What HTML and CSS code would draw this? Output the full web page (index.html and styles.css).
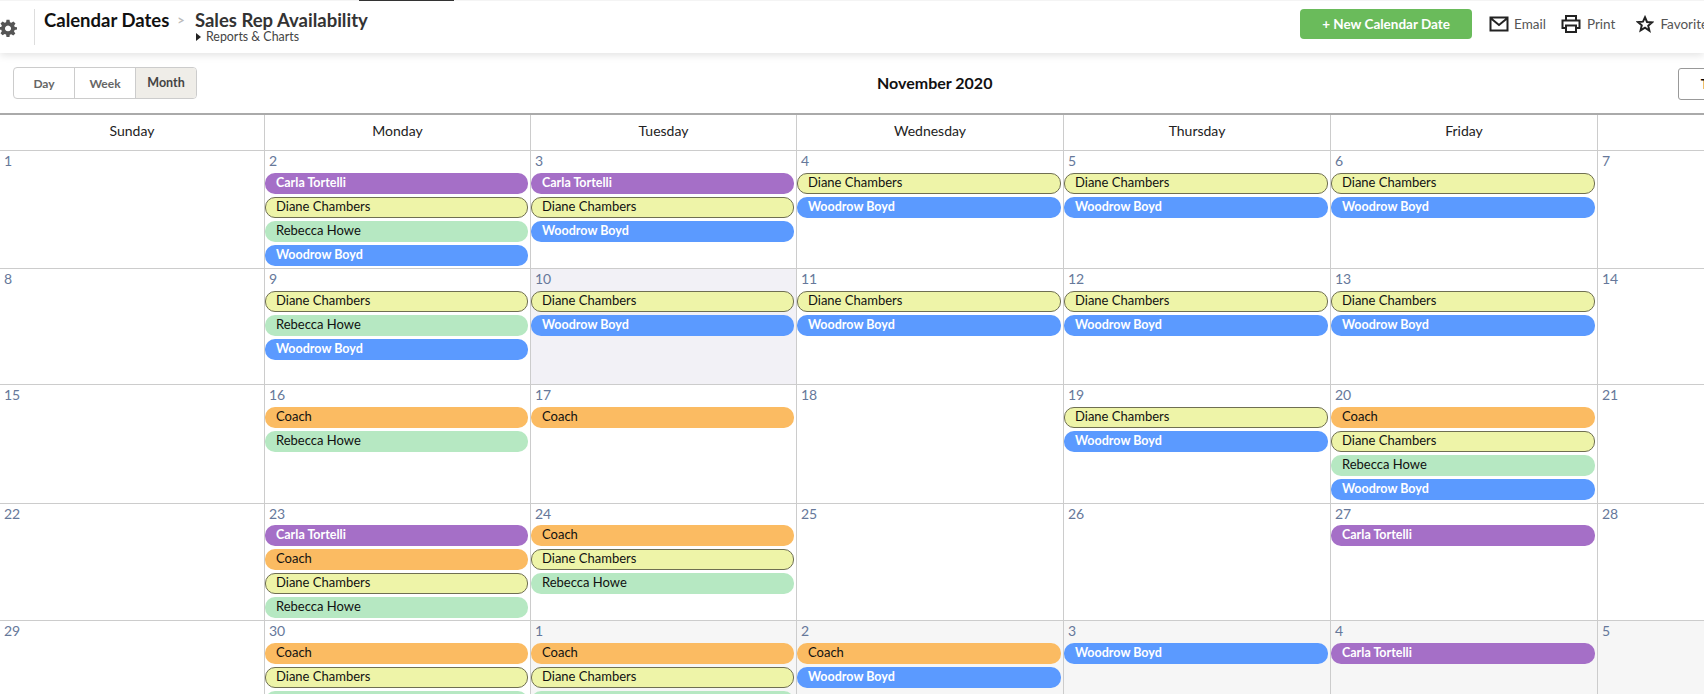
FILE: index.html
```html
<!DOCTYPE html>
<html lang="en">
<head>
    <meta charset="UTF-8">
    <title>Sales Rep Availability</title>
    <link rel="stylesheet" href="styles.css">
</head>
<body>

    <!-- Top bar -->
    <header class="topbar">
        <span class="tab-edge"></span>
        <svg class="gear" width="18" height="18" viewBox="0 0 24 24"><path fill="#555" fill-rule="evenodd" d="M10 1h4l.6 3.2 1.900.8 2.700-1.800 2.800 2.800-1.800 2.700.8 1.900L24 11v3l-3.200.6-.8 1.900 1.800 2.700-2.800 2.800-2.700-1.800-1.900.8L14 24h-4l-.6-3.200-1.900-.8-2.700 1.800L2 19l1.800-2.700-.8-1.900L0 14v-3l3-.4.8-1.900L2 6l2.800-2.800 2.700 1.800 1.900-.8zM12 8.500a4 4 0 1 0 .01 0z"/></svg>
        <div class="titles">
            <div class="title-line">
                <span class="title-main">Calendar Dates</span>
                <span class="title-sep">&gt;</span>
                <span class="title-report">Sales Rep Availability</span>
            </div>
            <div class="subtitle"><span class="caret"></span>Reports &amp; Charts</div>
        </div>
        <div class="actions">
            <button class="new-btn">+ New Calendar Date</button>
            <span class="action email">
                <svg width="20" height="16" viewBox="0 0 20 16"><path fill="none" stroke="#222" stroke-width="2" d="M1.500 1.500h17v13h-17zM1.500 2l8.500 7 8.500-7"/></svg>
                Email
            </span>
            <span class="action print">
                <svg width="20" height="20" viewBox="0 0 20 20"><path fill="none" stroke="#222" stroke-width="2" d="M5 6V2h10v4M5 14H1.500V6.500h17V14H15M5 11.500h10V18H5z"/></svg>
                Print
            </span>
            <span class="action favorite">
                <svg width="18" height="18" viewBox="0 0 24 24"><path fill="none" stroke="#222" stroke-width="2.600" stroke-linejoin="miter" d="M12 3l2.700 6.300 6.800.6-5.200 4.400 1.600 6.700L12 17l-5.900 3.500 1.600-6.700-5.200-4.400 6.800-.6z"/></svg>
                Favorites
            </span>
        </div>
    </header>

    <!-- View switch -->
    <div class="toolbar">
        <div class="views">
            <span class="view">Day</span>
            <span class="view">Week</span>
            <span class="view active">Month</span>
        </div>
        <div class="month-title">November 2020</div>
        <button class="today">Today</button>
    </div>

    <!-- Calendar -->
    <div class="calendar">
        <div class="head">Sunday</div>
        <div class="head">Monday</div>
        <div class="head">Tuesday</div>
        <div class="head">Wednesday</div>
        <div class="head">Thursday</div>
        <div class="head">Friday</div>
        <div class="head">Saturday</div>

        <div class="day r1"><span class="num">1</span></div>
        <div class="day r1"><span class="num">2</span><div class="ev carla">Carla Tortelli</div><div class="ev diane">Diane Chambers</div><div class="ev rebecca">Rebecca Howe</div><div class="ev woody">Woodrow Boyd</div></div>
        <div class="day r1"><span class="num">3</span><div class="ev carla">Carla Tortelli</div><div class="ev diane">Diane Chambers</div><div class="ev woody">Woodrow Boyd</div></div>
        <div class="day r1"><span class="num">4</span><div class="ev diane">Diane Chambers</div><div class="ev woody">Woodrow Boyd</div></div>
        <div class="day r1"><span class="num">5</span><div class="ev diane">Diane Chambers</div><div class="ev woody">Woodrow Boyd</div></div>
        <div class="day r1"><span class="num">6</span><div class="ev diane">Diane Chambers</div><div class="ev woody">Woodrow Boyd</div></div>
        <div class="day r1"><span class="num">7</span></div>

        <div class="day r2"><span class="num">8</span></div>
        <div class="day r2"><span class="num">9</span><div class="ev diane">Diane Chambers</div><div class="ev rebecca">Rebecca Howe</div><div class="ev woody">Woodrow Boyd</div></div>
        <div class="day r2 now"><span class="num">10</span><div class="ev diane">Diane Chambers</div><div class="ev woody">Woodrow Boyd</div></div>
        <div class="day r2"><span class="num">11</span><div class="ev diane">Diane Chambers</div><div class="ev woody">Woodrow Boyd</div></div>
        <div class="day r2"><span class="num">12</span><div class="ev diane">Diane Chambers</div><div class="ev woody">Woodrow Boyd</div></div>
        <div class="day r2"><span class="num">13</span><div class="ev diane">Diane Chambers</div><div class="ev woody">Woodrow Boyd</div></div>
        <div class="day r2"><span class="num">14</span></div>

        <div class="day r3"><span class="num">15</span></div>
        <div class="day r3"><span class="num">16</span><div class="ev coach">Coach</div><div class="ev rebecca">Rebecca Howe</div></div>
        <div class="day r3"><span class="num">17</span><div class="ev coach">Coach</div></div>
        <div class="day r3"><span class="num">18</span></div>
        <div class="day r3"><span class="num">19</span><div class="ev diane">Diane Chambers</div><div class="ev woody">Woodrow Boyd</div></div>
        <div class="day r3"><span class="num">20</span><div class="ev coach">Coach</div><div class="ev diane">Diane Chambers</div><div class="ev rebecca">Rebecca Howe</div><div class="ev woody">Woodrow Boyd</div></div>
        <div class="day r3"><span class="num">21</span></div>

        <div class="day r4"><span class="num">22</span></div>
        <div class="day r4"><span class="num">23</span><div class="ev carla">Carla Tortelli</div><div class="ev coach">Coach</div><div class="ev diane">Diane Chambers</div><div class="ev rebecca">Rebecca Howe</div></div>
        <div class="day r4"><span class="num">24</span><div class="ev coach">Coach</div><div class="ev diane">Diane Chambers</div><div class="ev rebecca">Rebecca Howe</div></div>
        <div class="day r4"><span class="num">25</span></div>
        <div class="day r4"><span class="num">26</span></div>
        <div class="day r4"><span class="num">27</span><div class="ev carla">Carla Tortelli</div></div>
        <div class="day r4"><span class="num">28</span></div>

        <div class="day r5"><span class="num">29</span></div>
        <div class="day r5"><span class="num">30</span><div class="ev coach">Coach</div><div class="ev diane">Diane Chambers</div><div class="ev rebecca">Rebecca Howe</div></div>
        <div class="day r5 other"><span class="num">1</span><div class="ev coach">Coach</div><div class="ev diane">Diane Chambers</div><div class="ev rebecca">Rebecca Howe</div></div>
        <div class="day r5 other"><span class="num">2</span><div class="ev coach">Coach</div><div class="ev woody">Woodrow Boyd</div></div>
        <div class="day r5 other"><span class="num">3</span><div class="ev woody">Woodrow Boyd</div></div>
        <div class="day r5 other"><span class="num">4</span><div class="ev carla">Carla Tortelli</div></div>
        <div class="day r5 other"><span class="num">5</span></div>
    </div>

</body>
</html>
```

FILE: styles.css
```css
html, body {
    margin: 0;
    height: 694px;
    overflow: hidden;
    background: #fff;
    font-family: Lato, "Liberation Sans", sans-serif;
    color: #111;
}

/* Top bar */
.topbar {
    position: relative;
    display: flex;
    align-items: flex-start;
    height: 53px;
    border-top: 1px solid #f4f4f4;
    box-sizing: border-box;
    box-shadow: 0 2px 8px rgba(0,0,0,0.12);
}
.tab-edge {
    position: absolute;
    left: 359px;
    top: -1px;
    width: 95px;
    height: 1px;
    background-color: #333;
}
.gear {
    margin: 18px 0 0 -1px;
}
.titles {
    margin: 8px 0 0 17px;
    height: 36px;
    padding: 0 0 0 9px;
    border-left: 1px solid #ddd;
}
.title-line {
    display: flex;
    align-items: center;
    height: 21px;
    font-size: 18.500px;
    font-weight: 700;
}
.title-main {
    color: #111;
}
.title-sep {
    margin: 0 10px 0 8px;
    color: #bbb;
    font-size: 13px;
}
.title-report {
    color: #333;
}
.subtitle {
    display: flex;
    align-items: center;
    margin-left: 152px;
    font-size: 12.400px;
    line-height: 14px;
    color: #444;
}
.caret {
    width: 0;
    height: 0;
    margin: 0 5px 0 0;
    border-left: 5px solid #222;
    border-top: 4px solid transparent;
    border-bottom: 4px solid transparent;
}
.actions {
    display: flex;
    align-items: center;
    margin: 8px -10px 0 auto;
    font-size: 13.500px;
    color: #555;
}
.new-btn {
    width: 172px;
    height: 30px;
    margin-right: 17px;
    background-color: #6abb5b;
    color: #fff;
    border: none;
    border-radius: 4px;
    font-family: inherit;
    font-size: 13.500px;
    font-weight: 700;
}
.action {
    display: flex;
    align-items: center;
    gap: 5px;
    white-space: nowrap;
}
.print {
    gap: 6px;
    margin-left: 15px;
}
.favorite {
    gap: 6px;
    margin-left: 21px;
}

/* View switch */
.toolbar {
    position: relative;
    display: flex;
    align-items: center;
    height: 60px;
    padding-left: 13px;
}
.views {
    display: flex;
    height: 32px;
    border: 1px solid #ccc;
    border-radius: 4px;
    box-sizing: border-box;
    overflow: hidden;
    font-size: 12px;
    font-weight: 700;
    color: #666;
}
.view {
    display: flex;
    align-items: center;
    justify-content: center;
    width: 60px;
    border-right: 1px solid #ccc;
}
.view.active {
    border-right: none;
    padding-bottom: 2px;
    background-color: #efede8;
    color: #444;
    font-size: 12.500px;
}
.month-title {
    position: absolute;
    left: 877px;
    top: 20px;
    font-size: 16px;
    font-weight: 700;
}
.today {
    position: absolute;
    left: 1678px;
    top: 15px;
    width: 80px;
    height: 32px;
    background: #fff;
    border: 1px solid #999;
    border-radius: 3px;
    font-family: inherit;
    font-size: 13px;
    font-weight: 700;
}

/* Calendar */
.calendar {
    display: grid;
    grid-template-columns: 264px 266px 266px 267px 267px 267px 290px;
    grid-template-rows: 36px 118px 116px 119px 117px 100px;
    border-top: 2px solid #aaa;
    width: 1887px;
}
.head {
    display: flex;
    align-items: center;
    justify-content: center;
    padding-bottom: 4px;
    font-size: 14px;
    color: #222;
    border-left: 1px solid #ccc;
    border-bottom: 1px solid #ccc;
}
.head:first-child {
    border-left: none;
}
.day {
    box-sizing: border-box;
    border-left: 1px solid #ccc;
    border-bottom: 1px solid #ccc;
}
.day:nth-child(7n+1) {
    border-left: none;
}
.now {
    background-color: #f2f1f6;
}
.other {
    background-color: #f6f6f6;
}
.num {
    display: block;
    height: 22px;
    padding: 1px 0 0 4px;
    box-sizing: border-box;
    font-size: 14px;
    line-height: 18px;
    color: #66789a;
}
.r4 .num {
    height: 21px;
}
.ev {
    box-sizing: border-box;
    height: 21px;
    margin: 0 2px 3px 0;
    padding-left: 11px;
    border-radius: 10px;
    font-size: 13px;
    line-height: 18px;
    color: #111;
}
.carla {
    background-color: #a56fc7;
    color: #fff;
    font-weight: 700;
    font-size: 12.500px;
    line-height: 20px;
}
.woody {
    background-color: #5b9aff;
    color: #fff;
    font-weight: 700;
    font-size: 12.500px;
    line-height: 20px;
}
.diane {
    background-color: #eef4a8;
    border: 1px solid #6f6f52;
    padding-left: 10px;
    line-height: 16px;
}
.rebecca {
    background-color: #b6e8c2;
}
.coach {
    background-color: #fbbb62;
}
```
